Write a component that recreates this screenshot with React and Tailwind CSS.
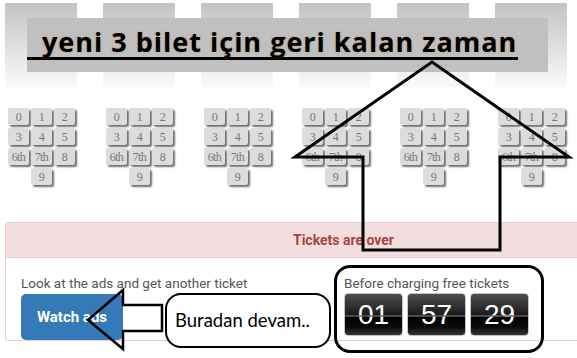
import React from 'react';

const keys = ['0', '1', '2', '3', '4', '5', '6th', '7th', '8'];

function Keypad() {
    return (
        <div className="w-[67px]">
            <div className="grid grid-cols-[21px_21px_21px] gap-x-[2px] gap-y-[3px]">
                {keys.map((k) => (
                    <Key key={k} label={k} />
                ))}
                <div />
                <Key label="9" />
            </div>
        </div>
    );
}

function Key({ label }) {
    return (
        <div className="h-[17px] w-[21px] rounded-[2px] bg-[#dcdcdc] shadow-[2px_2px_2px_#6f6f6f] flex items-center justify-center text-[12px] leading-none text-[#777] font-['Liberation_Serif',serif] tracking-[-0.6px]">
            {label}
        </div>
    );
}

function FlipDigit({ value }) {
    return (
        <div className="relative w-[59px] h-[43px] rounded-[4px] border border-[#c4c4c4] bg-[linear-gradient(to_bottom,#4f4f4f_0%,#1c1c1c_50%,#000_54%,#0a0a0a_80%,#333_100%)] flex items-center justify-center overflow-hidden">
            <span className="text-[28px] leading-none text-white font-['Liberation_Sans',sans-serif]">{value}</span>
            <div className="absolute left-0 right-0 top-[21px] h-[2px] bg-[#6a6a6a]/70" />
        </div>
    );
}

export default function App() {
    return (
        <div className="relative w-[577px] h-[358px] overflow-hidden bg-white font-['Roboto',sans-serif]">
            {/* Banner */}
            <div className="relative h-[88px] pt-[3px]">
                <div className="flex gap-[26px] pl-[5px]">
                    {[0, 1, 2, 3, 4, 5].map((i) => (
                        <div key={i} className="w-[72px] h-[85px] bg-gradient-to-b from-[#c3c3c3] to-[#fbfbfb]" />
                    ))}
                </div>
                <div className="absolute left-[27px] top-[18px] w-[521px] h-[54px] bg-[#c0c0c0]">
                    <div className="mt-[8px] inline-block border-b-[3px] border-black pl-[15px] pr-[1px] h-[34px] text-[27px] leading-[32px] font-bold text-black font-['Open_Sans',sans-serif] tracking-[1px] [text-shadow:0_0_2px_rgba(190,110,20,0.55)]">
                        yeni 3 bilet için geri kalan zaman
                    </div>
                </div>
            </div>

            {/* Keypads */}
            <div className="mt-[20px] flex gap-[31px] pl-[8px]">
                {[0, 1, 2, 3, 4, 5].map((i) => (
                    <Keypad key={i} />
                ))}
            </div>

            {/* Tickets panel */}
            <div className="mt-[37px] ml-[5px] w-[677px] border border-[#ebccd1] rounded-[3px] bg-white">
                <div className="h-[35px] bg-[#f2dede] border-b border-[#ebccd1] flex items-center justify-center text-[14px] font-bold text-[#a94442]">
                    Tickets are over
                </div>
                <div className="flex pt-[16px] pl-[15px]">
                    <div className="w-[323px]">
                        <p className="text-[13.5px] leading-[18px] text-[#555]">Look at the ads and get another ticket</p>
                        <button className="mt-[2px] w-[102px] h-[46px] rounded-[5px] bg-[#337ab7] text-white text-[15px] font-bold">
                            Watch ads
                        </button>
                    </div>
                    <div>
                        <p className="text-[13.5px] leading-[18px] text-[#555]">Before charging free tickets</p>
                        <div className="mt-[1px] flex gap-[4px]">
                            <FlipDigit value="01" />
                            <FlipDigit value="57" />
                            <FlipDigit value="29" />
                        </div>
                    </div>
                </div>
            </div>

            {/* Annotations */}
            <div className="absolute left-[165px] top-[293px] w-[166px] h-[55px] rounded-[16px] border-2 border-black bg-white flex items-center pl-[8px] text-[18.5px] text-black font-['Lato',sans-serif]">
                Buradan devam..
            </div>
            <div className="absolute left-[334px] top-[265px] w-[210px] h-[88px] rounded-[16px] border-[3px] border-black" />
            <svg className="absolute inset-0 pointer-events-none" width="577" height="358" viewBox="0 0 577 358">
                <path d="M295 157 L432 62 L569 157 L500 157 L500 250 L363 250 L363 157 Z" fill="none" stroke="black" strokeWidth="3" strokeLinejoin="miter" />
                <path d="M88 320 L123 290 L123 305 L162 305 L162 331 L123 331 L123 349 Z" fill="none" stroke="black" strokeWidth="2.5" />
            </svg>
        </div>
    );
}
